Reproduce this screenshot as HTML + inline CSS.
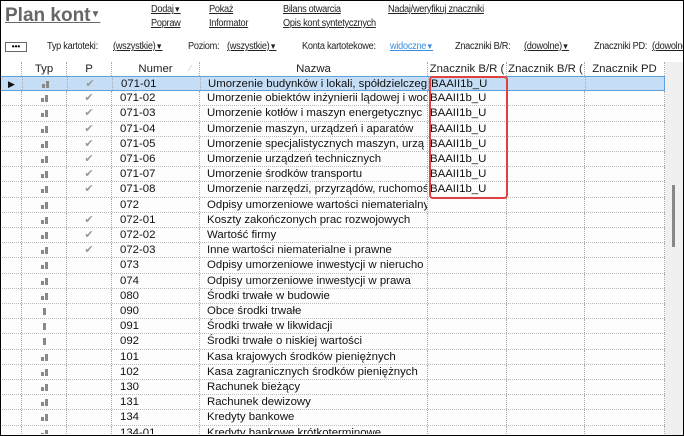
<!DOCTYPE html>
<html><head><meta charset="utf-8"><style>
*{margin:0;padding:0;box-sizing:border-box}
body{width:684px;height:436px;overflow:hidden;background:#fff;font-family:"Liberation Sans",Arial,sans-serif;position:relative}
#frame{position:absolute;left:0;top:0;width:684px;height:436px;border:1px solid #000;}
.t{position:absolute;white-space:nowrap;color:#222}
.u{text-decoration:underline}
.s{font-size:10px;letter-spacing:-0.3px;transform:scaleX(0.92);transform-origin:left}
.tri{font-size:8px}
#grid{position:absolute;left:0;top:62px;width:665px;height:372px;overflow:hidden}
.row{position:absolute;left:0;width:665px;height:15.2px;border-bottom:1px dotted #bbb;font-size:11.4px;color:#111}
.c{position:absolute;top:0;height:100%;border-right:1px dotted #aaa;overflow:hidden;white-space:nowrap;line-height:14px}
.hd{font-size:11.4px;color:#222;text-align:center}
.sel{background:#c5def6;border:1px solid #5ea0e0}
.bar{position:absolute;top:3px;left:19px;width:8px;height:8px}
.bar i{position:absolute;bottom:0;background:#888;width:3px}
.ck{color:#999;font-size:11px;text-align:center}
#sb{position:absolute;left:665px;top:62px;width:18px;height:373px;background:#f0f0f0}
#th{position:absolute;left:672px;top:185px;width:3px;height:62px;background:#888}
#red{position:absolute;left:429px;top:76px;width:79px;height:123px;border:2px solid #e0403f;border-radius:4px}
</style></head><body>
<div class="t u" style="left:5px;top:5px;font-size:19px;font-weight:bold;color:#666">Plan kont<span style="font-size:10px;vertical-align:4px">▼</span></div>
<div class="t u s" style="left:151px;top:4px">Dodaj<span class="tri">▼</span></div>
<div class="t u s" style="left:151px;top:18px">Popraw</div>
<div class="t u s" style="left:209px;top:4px">Pokaż</div>
<div class="t u s" style="left:209px;top:18px">Informator</div>
<div class="t u s" style="left:283px;top:4px">Bilans otwarcia</div>
<div class="t u s" style="left:283px;top:18px">Opis kont syntetycznych</div>
<div class="t u s" style="left:388px;top:4px">Nadaj/weryfikuj znaczniki</div>
<div style="position:absolute;left:5px;top:42px;width:22px;height:10px;border:1px solid #666;font-size:8px;text-align:center;line-height:7px;font-weight:bold">•••</div>
<div class="t s" style="left:47px;top:41px">Typ kartoteki:</div>
<div class="t u s" style="left:113px;top:41px">(wszystkie)<span class="tri">▼</span></div>
<div class="t s" style="left:188px;top:41px">Poziom:</div>
<div class="t u s" style="left:227px;top:41px">(wszystkie)<span class="tri">▼</span></div>
<div class="t s" style="left:302px;top:41px">Konta kartotekowe:</div>
<div class="t u s" style="left:390px;top:41px;color:#3b8ee0">widoczne<span class="tri">▼</span></div>
<div class="t s" style="left:455px;top:41px">Znaczniki B/R:</div>
<div class="t u s" style="left:524px;top:41px">(dowolne)<span class="tri">▼</span></div>
<div class="t s" style="left:594px;top:41px">Znaczniki PD:</div>
<div class="t u s" style="left:652px;top:41px">(dowolne)</div>
<div id="grid"></div>
<div id="sb"></div><div id="th"></div>
<div id="red"></div>
<div id="frame"></div>
<script>
var cols=[0,22,67,112,200,428,507,585,665];
var rows=[["2","1","071-01","Umorzenie budynków i lokali, spółdzielczeg","BAAII1b_U"],
["2","1","071-02","Umorzenie obiektów inżynierii lądowej i wod","BAAII1b_U"],
["2","1","071-03","Umorzenie kotłów i maszyn energetycznyc","BAAII1b_U"],
["2","1","071-04","Umorzenie maszyn, urządzeń i aparatów","BAAII1b_U"],
["2","1","071-05","Umorzenie specjalistycznych maszyn, urzą","BAAII1b_U"],
["2","1","071-06","Umorzenie urządzeń technicznych","BAAII1b_U"],
["2","1","071-07","Umorzenie środków transportu","BAAII1b_U"],
["2","1","071-08","Umorzenie narzędzi, przyrządów, ruchomoś","BAAII1b_U"],
["2","","072","Odpisy umorzeniowe wartości niematerialny",""],
["2","1","072-01","Koszty zakończonych prac rozwojowych",""],
["2","1","072-02","Wartość firmy",""],
["2","1","072-03","Inne wartości niematerialne i prawne",""],
["2","","073","Odpisy umorzeniowe inwestycji w nierucho",""],
["2","","074","Odpisy umorzeniowe inwestycji w prawa",""],
["2","","080","Środki trwałe w budowie",""],
["1","","090","Obce środki trwałe",""],
["1","","091","Środki trwałe w likwidacji",""],
["1","","092","Środki trwałe o niskiej wartości",""],
["2","","101","Kasa krajowych środków pieniężnych",""],
["2","","102","Kasa zagranicznych środków pieniężnych",""],
["2","","130","Rachunek bieżący",""],
["2","","131","Rachunek dewizowy",""],
["2","","134","Kredyty bankowe",""],
["2","","134-01","Kredyty bankowe krótkoterminowe",""]];
var g=document.getElementById('grid'),h='';
function cells(v,hd){var s='';for(var i=0;i<8;i++){s+='<div class="c'+(hd?' hd':'')+'" style="left:'+cols[i]+'px;width:'+(cols[i+1]-cols[i])+'px;'+(hd?'':(i>=3?'padding-left:'+(i==3?8:i==4?7:2)+'px;':''))+'">'+v[i]+'</div>';}return s;}
h+='<div class="row" style="top:0">'+cells(['','Typ','P','Numer<span style="position:absolute;right:8px;color:#bbb;font-size:8px">⁄</span>','Nazwa','Znacznik B/R (','Znacznik B/R (','Znacznik PD'],1)+'</div>';
rows.forEach(function(r,k){
var bar=r[0]=="2"?'<i style="left:0;height:4px"></i><i style="left:4px;height:7px"></i>':'<i style="left:2px;height:7px"></i>';
var v=[k==0?'<span style="font-size:9px;padding-left:7px">▶</span>':'','<span class="bar">'+bar+'</span>',r[1]?'<div class="ck">✔</div>':'',r[2],r[3],r[4],'',''];
h+='<div class="row'+(k==0?' sel':'')+'" style="top:'+(14+k*15.2).toFixed(1)+'px;'+(k==0?'':'background:#fdfdfd')+'">'+cells(v,0)+'</div>';});
g.innerHTML=h;
</script>
</body></html>
